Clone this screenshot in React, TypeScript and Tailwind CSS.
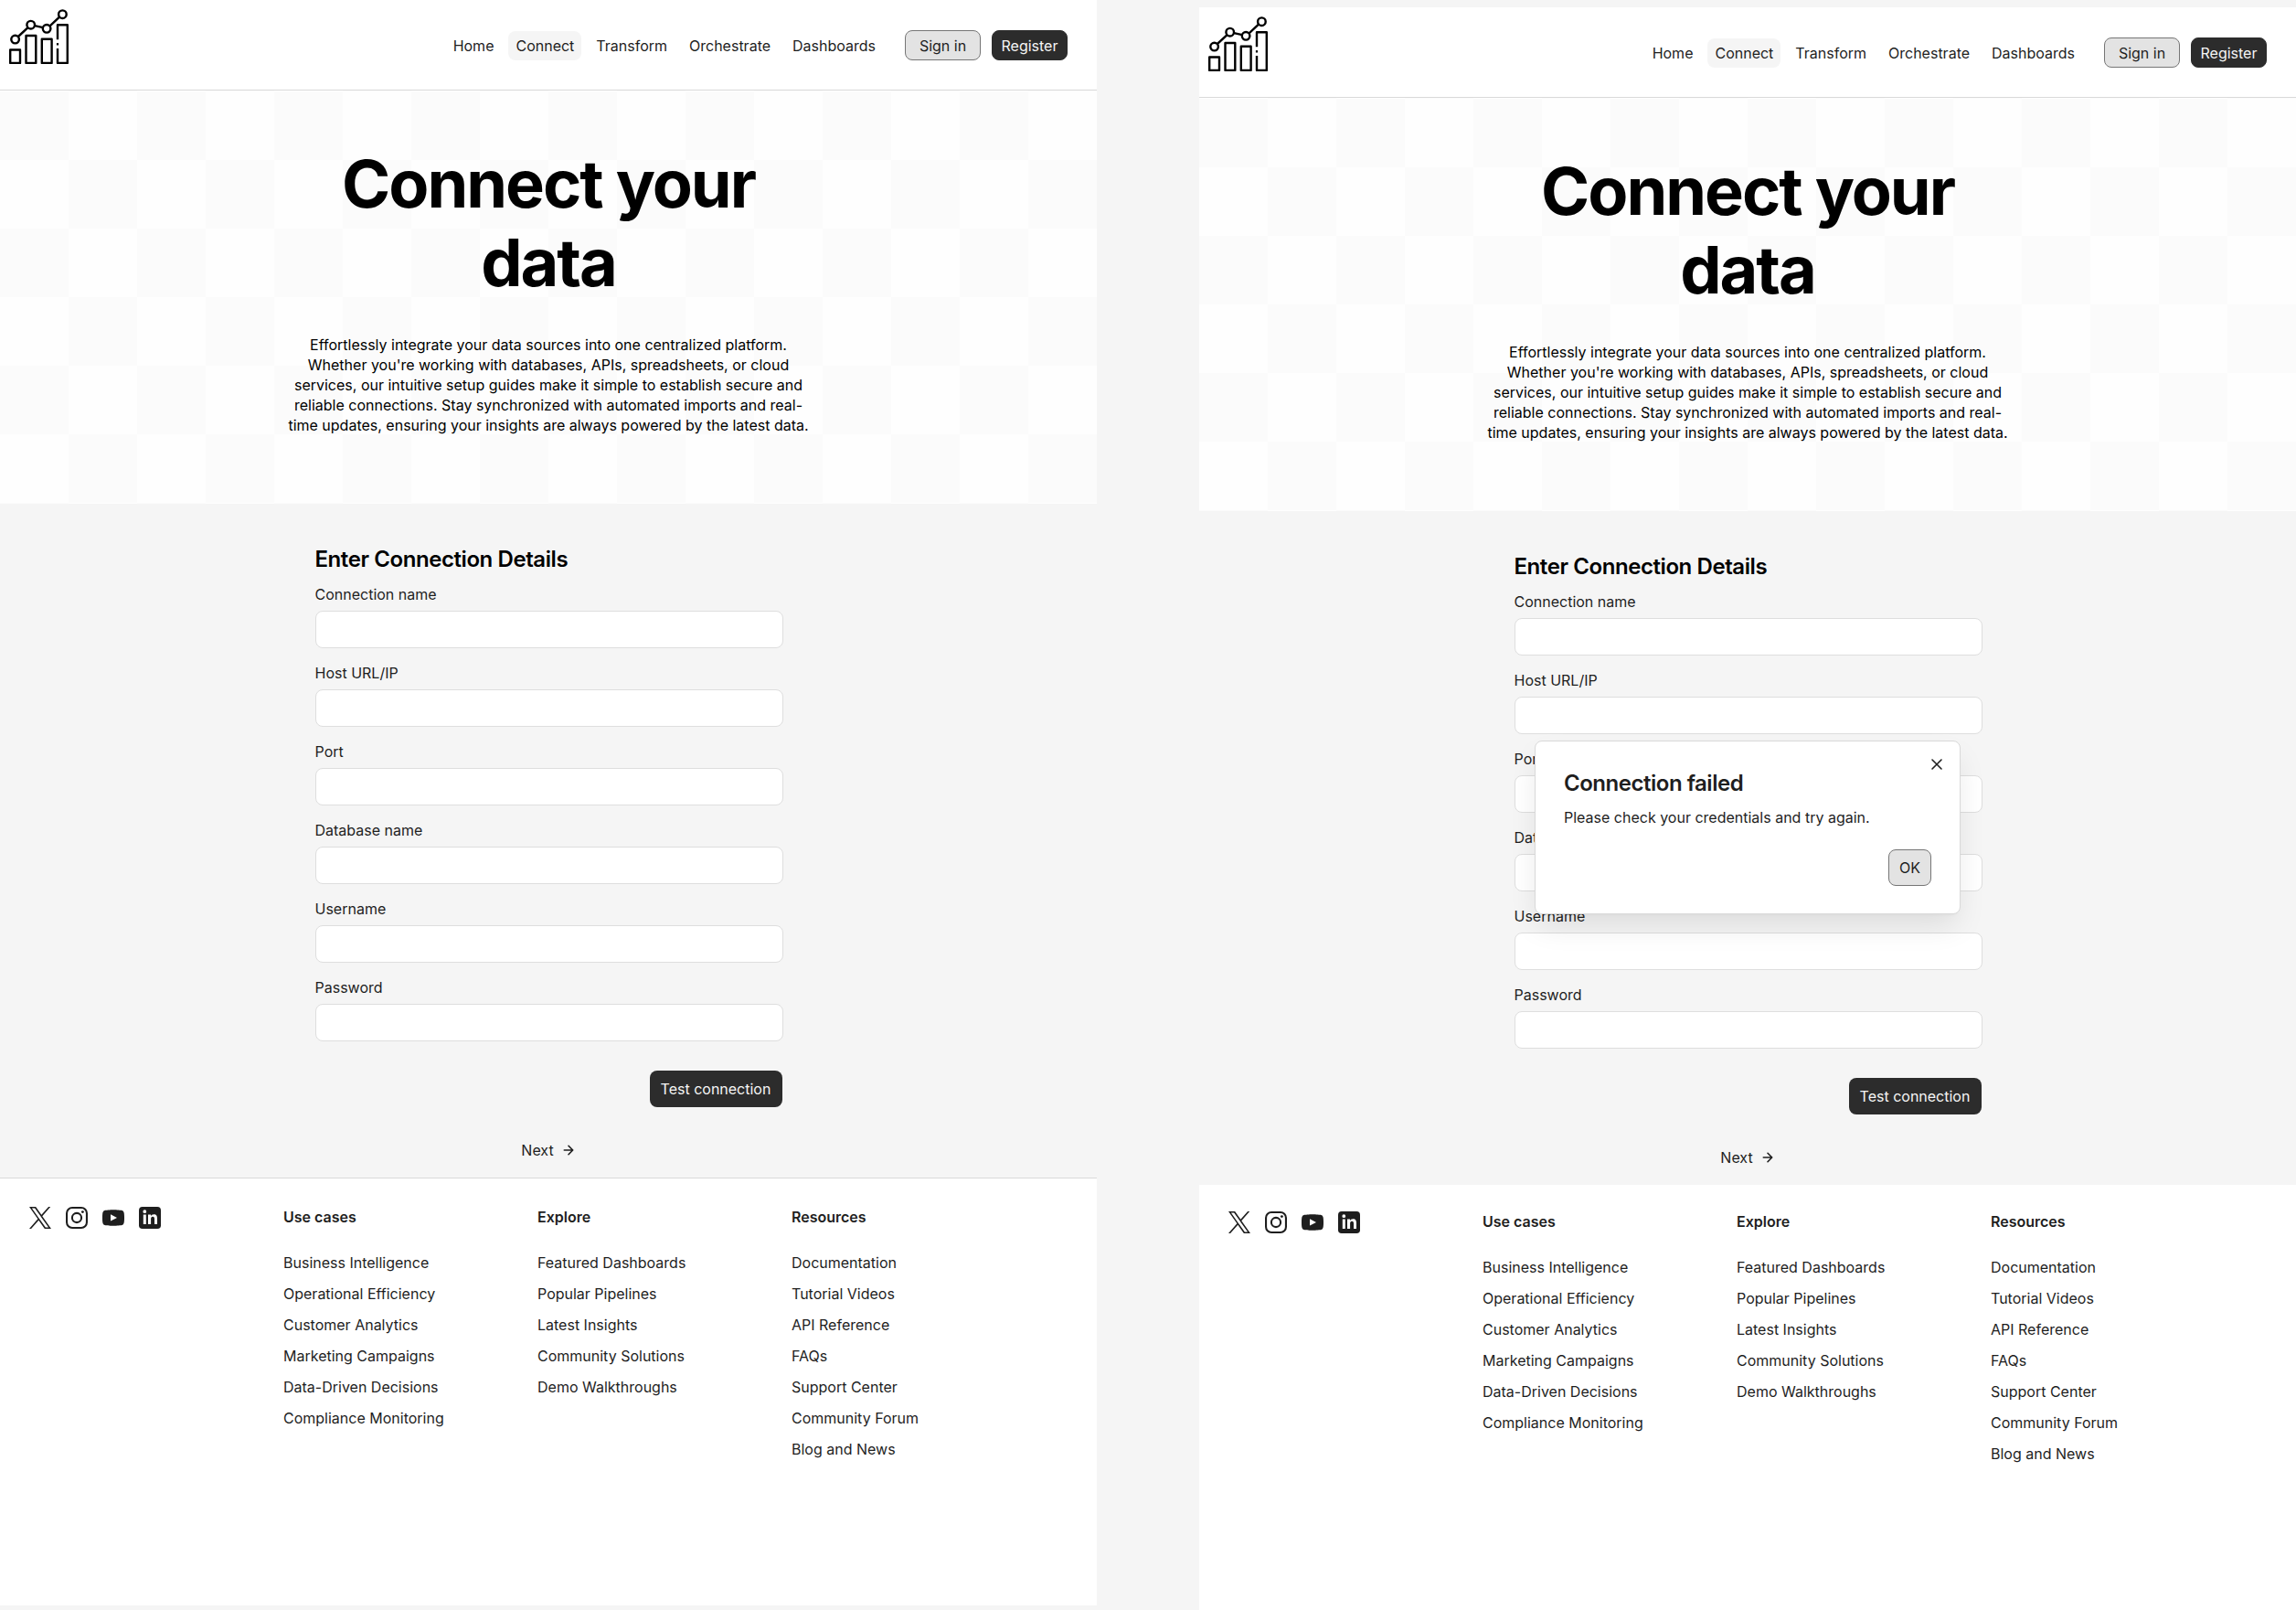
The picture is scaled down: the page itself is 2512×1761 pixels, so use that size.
import React from "react";

const links = ["Home", "Connect", "Transform", "Orchestrate", "Dashboards"];

const fields = ["Connection name", "Host URL/IP", "Port", "Database name", "Username", "Password"];

const copy = [
  "Effortlessly integrate your data sources into one centralized platform.",
  "Whether you're working with databases, APIs, spreadsheets, or cloud",
  "services, our intuitive setup guides make it simple to establish secure and",
  "reliable connections. Stay synchronized with automated imports and real-",
  "time updates, ensuring your insights are always powered by the latest data.",
];

const columns = [
  {
    title: "Use cases",
    items: [
      "Business Intelligence",
      "Operational Efficiency",
      "Customer Analytics",
      "Marketing Campaigns",
      "Data-Driven Decisions",
      "Compliance Monitoring",
    ],
  },
  {
    title: "Explore",
    items: [
      "Featured Dashboards",
      "Popular Pipelines",
      "Latest Insights",
      "Community Solutions",
      "Demo Walkthroughs",
    ],
  },
  {
    title: "Resources",
    items: [
      "Documentation",
      "Tutorial Videos",
      "API Reference",
      "FAQs",
      "Support Center",
      "Community Forum",
      "Blog and News",
    ],
  },
];

function Logo() {
  return (
    <svg
      className="h-[80px] w-[80px]"
      viewBox="0 0 80 80"
      fill="none"
      stroke="black"
      strokeWidth="2.4"
      strokeLinejoin="round"
    >
      <path d="M11.2 54.5h10.8v14.4H11.2zM28.5 39h10.8v29.9H28.5zM45.8 42.8h10.8v26.1H45.8z" />
      <path d="M63 43.3V27.3h10.8v41.6H63V53" />
      <path d="M61.9 48.3h2.2" />
      <path d="M19.9 40 30.3 30.3M38 28.2l9 2M54.6 28.3 65 18.6" />
      <circle cx="16.6" cy="43.1" r="4.3" />
      <circle cx="33.7" cy="27.2" r="4.3" />
      <circle cx="51.1" cy="31.3" r="4.3" />
      <circle cx="68.4" cy="15.7" r="4.3" />
    </svg>
  );
}

function Header() {
  return (
    <header className="flex h-[99px] items-start justify-between border-b border-[#d9d9d9] bg-white pr-8">
      <Logo />
      <div className="flex items-center gap-6 pt-[33px]">
        <nav className="flex gap-2">
          {links.map((l) => (
            <a
              key={l}
              className={
                l === "Connect"
                  ? "flex h-8 items-center rounded-lg bg-[#f5f5f5] px-2"
                  : "flex h-8 items-center px-2"
              }
            >
              {l}
            </a>
          ))}
        </nav>
        <div className="flex gap-3">
          <button className="h-[33px] w-[83px] rounded-lg border border-[#767676] bg-[#e3e3e3]">Sign in</button>
          <button className="h-[33px] w-[83px] rounded-lg border border-[#2c2c2c] bg-[#2c2c2c] text-[#f5f5f5]">
            Register
          </button>
        </div>
      </div>
    </header>
  );
}

function Hero() {
  return (
    <section className="h-[452px] bg-[#fdfdfd] bg-[conic-gradient(#fefefe_25%,#fbfbfb_0_50%,#fefefe_0_75%,#fbfbfb_0)] bg-[length:150px_150px] bg-[position:0_1px] pt-[59px] text-center text-black">
      <h1 className="text-[72px] leading-[86px] font-bold tracking-[-0.028em]">
        Connect your
        <br />
        data
      </h1>
      <p className="mt-[36px] leading-[22px]">
        {copy.map((line) => (
          <span key={line} className="block whitespace-nowrap">
            {line}
          </span>
        ))}
      </p>
    </section>
  );
}

function Dialog() {
  return (
    <div
      role="dialog"
      className="absolute top-[802px] left-[367px] h-[190px] w-[466px] rounded-lg border border-[#d9d9d9] bg-white px-[31px] shadow-[0_16px_32px_-4px_rgba(12,12,13,0.1),0_4px_4px_-4px_rgba(12,12,13,0.05)]"
    >
      <svg
        className="absolute top-[15px] right-[15px] h-5 w-5"
        viewBox="0 0 20 20"
        fill="none"
        stroke="#1e1e1e"
        strokeWidth="1.6"
        strokeLinecap="round"
        strokeLinejoin="round"
      >
        <path d="M15 5 5 15M5 5l10 10" />
      </svg>
      <h3 className="mt-[31px] text-2xl leading-[29px] font-semibold tracking-[-0.02em]">Connection failed</h3>
      <p className="mt-3 leading-[22px]">Please check your credentials and try again.</p>
      <div className="mt-6 flex justify-end">
        <button className="h-[40px] w-[47px] rounded-lg border border-[#767676] bg-[#e3e3e3]">OK</button>
      </div>
    </div>
  );
}

function ConnectionForm() {
  return (
    <main className="flex h-[737px] flex-col items-center pt-[46px]">
      <form className="ml-px flex w-[512px] flex-col">
        <h2 className="text-2xl leading-[29px] font-semibold tracking-[-0.0175em] text-black">
          Enter Connection Details
        </h2>
        <div className="mt-[13px] flex flex-col gap-4">
          {fields.map((f) => (
            <label key={f} className="flex flex-col gap-[7px]">
              <span className="leading-[22px]">{f}</span>
              <span className="h-[41px] rounded-lg border border-[#dedede] bg-white" />
            </label>
          ))}
        </div>
        <button
          type="button"
          className="mt-8 mr-px h-[40px] w-[145px] self-end rounded-lg bg-[#2c2c2c] text-[#f5f5f5]"
        >
          Test connection
        </button>
      </form>
      <a className="mt-9 flex items-center gap-2 leading-[22px]">
        Next
        <svg
          className="h-4 w-4"
          viewBox="0 0 16 16"
          fill="none"
          stroke="#1e1e1e"
          strokeWidth="1.6"
          strokeLinecap="round"
          strokeLinejoin="round"
        >
          <path d="M3.3 8h9.4M8 3.3 12.7 8 8 12.7" />
        </svg>
      </a>
    </main>
  );
}

function Socials() {
  return (
    <div className="flex w-[262px] gap-4 text-[#1e1e1e]">
      <svg className="h-6 w-6" viewBox="0 0 24 24" fill="currentColor">
        <path d="M14.28 10.16 23.22 0H21.1l-7.76 8.82L7.15 0H0l9.37 13.34L0 24h2.12l8.19-9.32L16.85 24H24L14.28 10.16Zm-2.9 3.3-.95-1.33L2.88 1.56h3.25l6.1 8.53.94 1.33 7.92 11.1h-3.25l-6.46-9.06Z" />
      </svg>
      <svg className="h-6 w-6" viewBox="0 0 24 24" fill="none" stroke="currentColor" strokeWidth="2.1">
        <rect x="1.05" y="1.05" width="21.9" height="21.9" rx="6" />
        <circle cx="12" cy="12" r="5.1" />
        <circle cx="18.4" cy="5.6" r="1.45" fill="currentColor" stroke="none" />
      </svg>
      <svg className="h-6 w-6" viewBox="0 0 24 24" fill="currentColor">
        <path d="M23.76 7.2s-.23-1.65-.95-2.37c-.91-.96-1.93-.96-2.4-1.02C17.05 3.2 12 3.2 12 3.2s-5.05 0-8.41.61c-.47.06-1.49.06-2.4 1.02C.47 5.55.24 7.2.24 7.2S0 9.14 0 11.07v1.82c0 1.93.24 3.87.24 3.87s.23 1.65.95 2.37c.91.96 2.11.92 2.65 1.03 1.92.18 8.16.64 8.16.64s5.05-.41 8.41-.65c.47-.06 1.49-.06 2.4-1.02.72-.72.95-2.37.95-2.37s.24-1.93.24-3.87v-1.82c0-1.93-.24-3.87-.24-3.87ZM9 15.5V8.3L16 12l-7 3.5Z" />
      </svg>
      <svg className="h-6 w-6" viewBox="0 0 24 24">
        <rect width="24" height="24" rx="3.8" fill="currentColor" />
        <path
          fill="white"
          d="M4.8 8.5h3V19h-3zM6.3 3.3a1.9 1.9 0 1 1 0 3.8 1.9 1.9 0 0 1 0-3.8ZM10 8.5h3v1.6c.5-.9 1.6-1.9 3.3-1.9 3 0 3.7 2 3.7 4.6V19h-3v-5.3c0-1.4-.1-2.9-1.9-2.9s-2 1.4-2 2.8V19H10z"
        />
      </svg>
    </div>
  );
}

function Footer({ raised }: { raised?: boolean }) {
  return (
    <footer
      className={
        raised
          ? "flex flex-1 gap-4 bg-white px-8 pt-[29px]"
          : "flex h-[468px] gap-4 border-t border-[#d9d9d9] bg-white px-8 pt-[31px]"
      }
    >
      <Socials />
      {columns.map((c) => (
        <div key={c.title} className="w-[262px]">
          <h4 className="leading-[22px] font-semibold">{c.title}</h4>
          <ul className="mt-7 flex flex-col gap-3">
            {c.items.map((i) => (
              <li key={i} className="leading-[22px]">
                {i}
              </li>
            ))}
          </ul>
        </div>
      ))}
    </footer>
  );
}

function Page({ failed }: { failed?: boolean }) {
  return (
    <div className={failed ? "relative mt-2 flex h-[1753px] w-[1200px] flex-col" : "flex h-[1761px] w-[1200px] flex-col"}>
      <Header />
      <Hero />
      <ConnectionForm />
      <Footer raised={failed} />
      {failed && <Dialog />}
    </div>
  );
}

export default function App() {
  return (
    <div className="flex h-[1761px] w-[2512px] justify-between overflow-hidden bg-[#f5f5f5] font-['Inter',sans-serif] text-base text-[#1e1e1e]">
      <Page />
      <Page failed />
    </div>
  );
}
